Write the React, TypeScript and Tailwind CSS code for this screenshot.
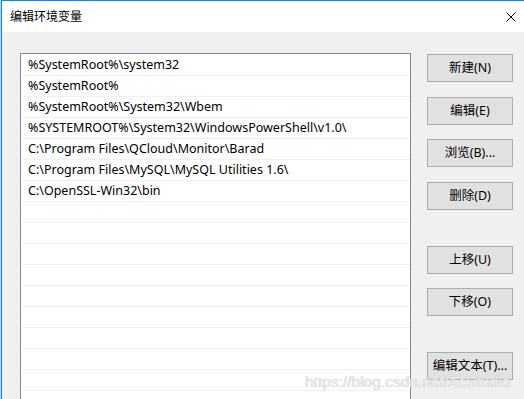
const paths = [
  '%SystemRoot%\\system32',
  '%SystemRoot%',
  '%SystemRoot%\\System32\\Wbem',
  '%SYSTEMROOT%\\System32\\WindowsPowerShell\\v1.0\\',
  'C:\\Program Files\\QCloud\\Monitor\\Barad',
  'C:\\Program Files\\MySQL\\MySQL Utilities 1.6\\',
  'C:\\OpenSSL-Win32\\bin',
]

const rows = [...paths, ...Array(10).fill('')]

function WinButton({ label, className = '' }: { label: string; className?: string }) {
  return (
    <button
      className={`flex h-[28px] w-[86px] items-center justify-center border border-[#adadad] bg-[#e1e1e1] text-[12.5px] text-black ${className}`}
    >
      {label}
    </button>
  )
}

export default function App() {
  return (
    <div className="relative flex h-[399px] w-[524px] overflow-hidden bg-[#f0f0f0] font-['Noto_Sans','Noto_Sans_CJK_SC',sans-serif]">
      <div className="w-px shrink-0 bg-[#c8c8c8]" />
      <div className="flex flex-1 flex-col border-l border-t border-[#1883d7]">
        {/* title bar */}
        <div className="flex h-[31px] shrink-0 items-center justify-between bg-white pl-[8px] pr-[7px]">
          <span className="text-[12px] text-black">编辑环境变量</span>
          <svg width="10" height="10" viewBox="0 0 10 10" className="mr-[1px]">
            <path d="M0.5 0.5L9.5 9.5M9.5 0.5L0.5 9.5" stroke="#000" strokeWidth="1" />
          </svg>
        </div>

        <div className="flex flex-1 gap-[16px] pl-[18px] pt-[21px]">
          {/* list */}
          <div className="h-[360px] w-[391px] shrink-0 border border-[#828790] bg-white pl-px pt-px">
            {rows.map((p, i) => (
              <div
                key={i}
                className="flex h-[21px] items-center border-b border-[#f0f0f0] pl-[6px] text-[12.5px] text-black"
              >
                {p}
              </div>
            ))}
          </div>

          {/* buttons */}
          <div className="flex flex-col pt-[1px]">
            <WinButton label="新建(N)" />
            <WinButton label="编辑(E)" className="mt-[15px]" />
            <WinButton label="浏览(B)..." className="mt-[14px]" />
            <WinButton label="删除(D)" className="mt-[15px]" />
            <WinButton label="上移(U)" className="mt-[36px]" />
            <WinButton label="下移(O)" className="mt-[14px]" />
            <WinButton label="编辑文本(T)..." className="mt-[36px]" />
          </div>
        </div>
      </div>

      <span className="pointer-events-none absolute left-[305px] top-[370px] font-['Liberation_Sans',sans-serif] text-[15.5px] text-[#ececec] [text-shadow:0_0_1px_#b0b0b0]">
        https://blog.csdn.net/AcStudio
      </span>
    </div>
  )
}
